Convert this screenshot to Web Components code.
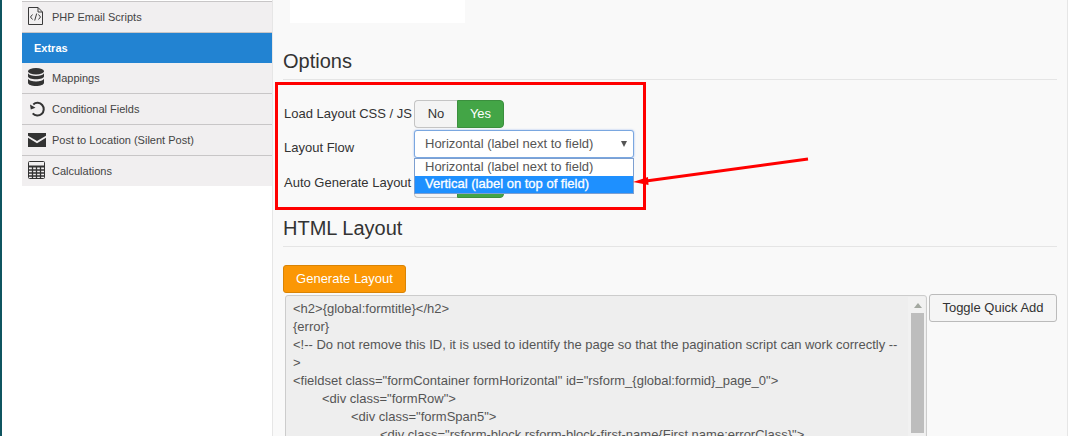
<!DOCTYPE html>
<html>
<head>
<meta charset="utf-8">
<style>
  html, body { margin: 0; padding: 0; height: 436px; overflow: hidden; background: #fff; }
  body { font-family: "Liberation Sans", Arial, sans-serif; color: #333; }
  #page { display: flex; height: 436px; border-left: 2px solid #0f5560; box-sizing: border-box; padding-left: 20px; width: 1070px; position: relative; }
</style>
</head>
<body>
<div id="page">
  <side-menu>
    <side-item icon="code">PHP Email Scripts</side-item>
    <side-item active>Extras</side-item>
    <side-item icon="db" noline>Mappings</side-item>
    <side-item icon="undo">Conditional Fields</side-item>
    <side-item icon="mail">Post to Location (Silent Post)</side-item>
    <side-item icon="calc">Calculations</side-item>
  </side-menu>
  <main-panel>
    <section-title style="margin-top:26px">Options</section-title>
    <option-row label="Load Layout CSS / JS" style="margin-top:20px;--label-bottom:2px"><yes-no>
      <span slot="no">No</span><span slot="yes">Yes</span>
    </yes-no></option-row>
    <option-row label="Layout Flow" style="margin-top:2px;--label-top:6px"><flow-select></flow-select></option-row>
    <option-row label="Auto Generate Layout" style="margin-top:12px;--label-bottom:4px"><yes-no></yes-no></option-row>
    <section-title style="margin-top:18px">HTML Layout</section-title>
    <layout-editor></layout-editor>
  </main-panel>
  <red-callout></red-callout>
</div>
<script>
const icons = {
  code: `<svg width="15" height="18" viewBox="0 0 15 18" fill="none" stroke="#3a3a3a" style="margin:-2px 0 0 0"><path d="M.5 .5h9.500l4.500 4.500v12.500h-14z"/><path d="M10 .5v4.500h4.500"/><path d="M4.500 7.500l-2 2.500 2 2.500M10.500 7.500l2 2.500-2 2.500M8.700 6.500l-2 7"/></svg>`,
  db: `<svg width="16" height="18" viewBox="0 0 16 18" fill="#333" style="margin-top:-2px"><ellipse cx="8" cy="3.200" rx="8" ry="3.200"/><path d="M0 5.300c1 1.800 4 2.700 8 2.700s7-.9 8-2.700v3c0 1.800-3.600 3-8 3s-8-1.200-8-3z"/><path d="M0 10.700c1 1.800 4 2.700 8 2.700s7-.9 8-2.700v4c0 1.900-3.600 3.300-8 3.300s-8-1.400-8-3.300z"/></svg>`,
  undo: `<svg width="15" height="16" viewBox="0 0 15 16" fill="none" style="margin:0 0 0 2px"><path d="M3.300 3.400A6.300 6.300 0 1 1 2.700 12.300" stroke="#333" stroke-width="2"/><path d="M0 3.500l5.500 3.200-4.700 1.800z" fill="#333"/></svg>`,
  mail: `<svg width="18" height="14" viewBox="0 0 18 14" fill="#333"><path d="M0 0h18v2.700L9 8 0 2.700z"/><path d="M0 4.800l9 5.400 9-5.400V14H0z"/></svg>`,
  calc: `<svg width="17" height="18" viewBox="0 0 17 18" fill="none" stroke="#333" style="margin-top:-2px"><rect x=".5" y=".5" width="16" height="17" rx="1" fill="#f1eff0"/><path d="M.5 5.500h16" stroke-width="2"/><path d="M.5 9h16M.5 12h16M.5 15h16M4.500 6v11.500M8.500 6v11.500M12.500 6v11.500" stroke-width="1.300"/></svg>`
};

class SideMenu extends HTMLElement {
  connectedCallback() {
    this.attachShadow({ mode: 'open' }).innerHTML = `
      <style>
        :host { display: block; width: 250px; flex: none; margin-top: 1px; height: 185px; background: #f1eff0; }
      </style>
      <slot></slot>`;
  }
}
customElements.define('side-menu', SideMenu);

class SideItem extends HTMLElement {
  connectedCallback() {
    const icon = this.getAttribute('icon');
    this.attachShadow({ mode: 'open' }).innerHTML = `
      <style>
        :host { display: flex; align-items: center; height: 30px; border-top: 1px solid #c8c6c7; font-size: 11px; color: #444; }
        :host([active]) { background: #2283d2; color: #fff; font-weight: bold; padding-left: 12px; }
        :host([noline]) { border-top: 0; }
        .ic { width: 30px; flex: none; display: flex; align-items: center; padding-left: 6px; box-sizing: border-box; }
      </style>
      ${icon ? `<span class="ic">${icons[icon]}</span>` : ''}<slot></slot>`;
  }
}
customElements.define('side-item', SideItem);

class MainPanel extends HTMLElement {
  connectedCallback() {
    this.attachShadow({ mode: 'open' }).innerHTML = `
      <style>
        :host { display: block; flex: none; width: 796px; height: 436px; box-sizing: border-box; background: #f9f9f9; border-left: 1px solid #e6e6e6; border-right: 1px solid #e6e6e6; padding: 0 10px; overflow: hidden; }
        .logo { width: 175px; height: 23px; background: #fff; margin-left: 7px; }
      </style>
      <div class="logo"></div>
      <slot></slot>`;
  }
}
customElements.define('main-panel', MainPanel);

class SectionTitle extends HTMLElement {
  connectedCallback() {
    this.attachShadow({ mode: 'open' }).innerHTML = `
      <style>
        :host { display: block; font-size: 20px; line-height: 24px; color: #333; padding-bottom: 6px; border-bottom: 1px solid #e5e5e5; }
      </style>
      <slot></slot>`;
  }
}
customElements.define('section-title', SectionTitle);

class OptionRow extends HTMLElement {
  connectedCallback() {
    this.attachShadow({ mode: 'open' }).innerHTML = `
      <style>
        :host { display: flex; align-items: center; font-size: 13px; color: #333; padding-left: 1px; }
        .label { width: 130px; flex: none; white-space: nowrap; padding-top: var(--label-top, 0); padding-bottom: var(--label-bottom, 0); }
      </style>
      <span class="label">${this.getAttribute('label')}</span><slot></slot>`;
  }
}
customElements.define('option-row', OptionRow);

class YesNo extends HTMLElement {
  connectedCallback() {
    this.attachShadow({ mode: 'open' }).innerHTML = `
      <style>
        :host { display: inline-flex; font-size: 13px; height: 28px; }
        div { display: flex; align-items: center; justify-content: center; box-sizing: border-box; padding-bottom: 2px; }
        .no { width: 43px; background: #f4f4f4; color: #333; border: 1px solid #c4c4c4; border-right: 0; border-radius: 4px 0 0 4px; }
        .yes { width: 47px; background: #43a546; color: #fff; border: 1px solid #3b8f3e; border-radius: 0 4px 4px 0; }
      </style>
      <div class="no"><slot name="no"></slot></div><div class="yes"><slot name="yes"></slot></div>`;
  }
}
customElements.define('yes-no', YesNo);

class FlowSelect extends HTMLElement {
  connectedCallback() {
    this.attachShadow({ mode: 'open' }).innerHTML = `
      <style>
        :host { display: block; position: relative; width: 220px; height: 28px; font-size: 13px; color: #555; }
        .box { height: 28px; box-sizing: border-box; border: 1px solid #7aa7e0; border-radius: 3px; background: #fff; display: flex; align-items: center; padding: 0 0 2px 10px; box-shadow: 0 0 2px rgba(102,150,233,.7); }
        .arrow { position: absolute; right: 7px; top: 11px; width: 0; height: 0; border: 3.500px solid transparent; border-top: 6px solid #555; border-bottom: 0; }
        .list { position: absolute; left: 0; top: 28px; width: 220px; box-sizing: border-box; border: 1px solid #7d9fd0; background: #fff; z-index: 2; height: 36px; }
        .list div { height: 17px; line-height: 15px; padding-left: 10px; white-space: nowrap; }
        .list .on { background: #1e90ff; color: #fff; -webkit-text-stroke: .3px #fff; line-height: 16px; }
      </style>
      <div class="box">Horizontal (label next to field)</div>
      <span class="arrow"></span>
      <div class="list"><div>Horizontal (label next to field)</div><div class="on">Vertical (label on top of field)</div></div>`;
  }
}
customElements.define('flow-select', FlowSelect);

class LayoutEditor extends HTMLElement {
  connectedCallback() {
    const code = `<h2>{global:formtitle}</h2>
{error}
<!-- Do not remove this ID, it is used to identify the page so that the pagination script can work correctly --
>
<fieldset class="formContainer formHorizontal" id="rsform_{global:formid}_page_0">
\t<div class="formRow">
\t\t<div class="formSpan5">
\t\t\t<div class="rsform-block rsform-block-first-name{First name:errorClass}">`;
    this.attachShadow({ mode: 'open' }).innerHTML = `
      <style>
        :host { display: block; margin-top: 18px; }
        .gen { display: flex; align-items: center; justify-content: center; width: 123px; height: 28px; box-sizing: border-box; background: #fb9705; border: 1px solid #d98405; border-radius: 3px; color: #fff; font-size: 13px; padding-bottom: 2px; }
        .wrap { display: flex; align-items: flex-start; margin: 2px 0 0 2px; }
        .area { position: relative; width: 642px; height: 200px; box-sizing: border-box; flex: none; background: #eee; border: 1px solid #ccc; border-radius: 3px; padding: 4px 7px; font-size: 13px; line-height: 18px; color: #555; white-space: pre; tab-size: 29px; overflow: hidden; }
        .track { position: absolute; right: 1px; top: 1px; bottom: 0; width: 17px; background: #f1f1f1; }
        .up { position: absolute; left: 6px; top: 6px; width: 0; height: 0; border: 4px solid transparent; border-bottom: 5px solid #a3a8a0; border-top: 0; }
        .thumb { position: absolute; left: 3px; top: 16px; width: 13px; height: 120px; background: #bdbdbd; }
        .toggle { display: flex; align-items: center; justify-content: center; width: 128px; height: 28px; margin: -1px 0 0 2px; box-sizing: border-box; background: #f5f5f5; border: 1px solid #bbb; border-radius: 3px; font-size: 13px; color: #333; padding-bottom: 2px; }
      </style>
      <div class="gen">Generate Layout</div>
      <div class="wrap">
        <div class="area"><span id="code"></span><div class="track"><span class="up"></span><span class="thumb"></span></div></div>
        <div class="toggle">Toggle Quick Add</div>
      </div>`;
    this.shadowRoot.getElementById('code').textContent = code;
  }
}
customElements.define('layout-editor', LayoutEditor);

class RedCallout extends HTMLElement {
  connectedCallback() {
    this.attachShadow({ mode: 'open' }).innerHTML = `
      <style>
        :host { position: absolute; left: -2px; top: 0; width: 1076px; height: 436px; pointer-events: none; display: block; z-index: 5; }
        svg { display: block; }
      </style>
      <svg width="1076" height="436" fill="none">
        <rect x="276.500" y="83.500" width="368" height="125" stroke="#f00" stroke-width="3"/>
        <path d="M808 159L646 181" stroke="#f00" stroke-width="3"/>
        <path d="M633 182l15-5 .500 8z" fill="#f00"/>
      </svg>`;
  }
}
customElements.define('red-callout', RedCallout);
</script>
</body>
</html>
